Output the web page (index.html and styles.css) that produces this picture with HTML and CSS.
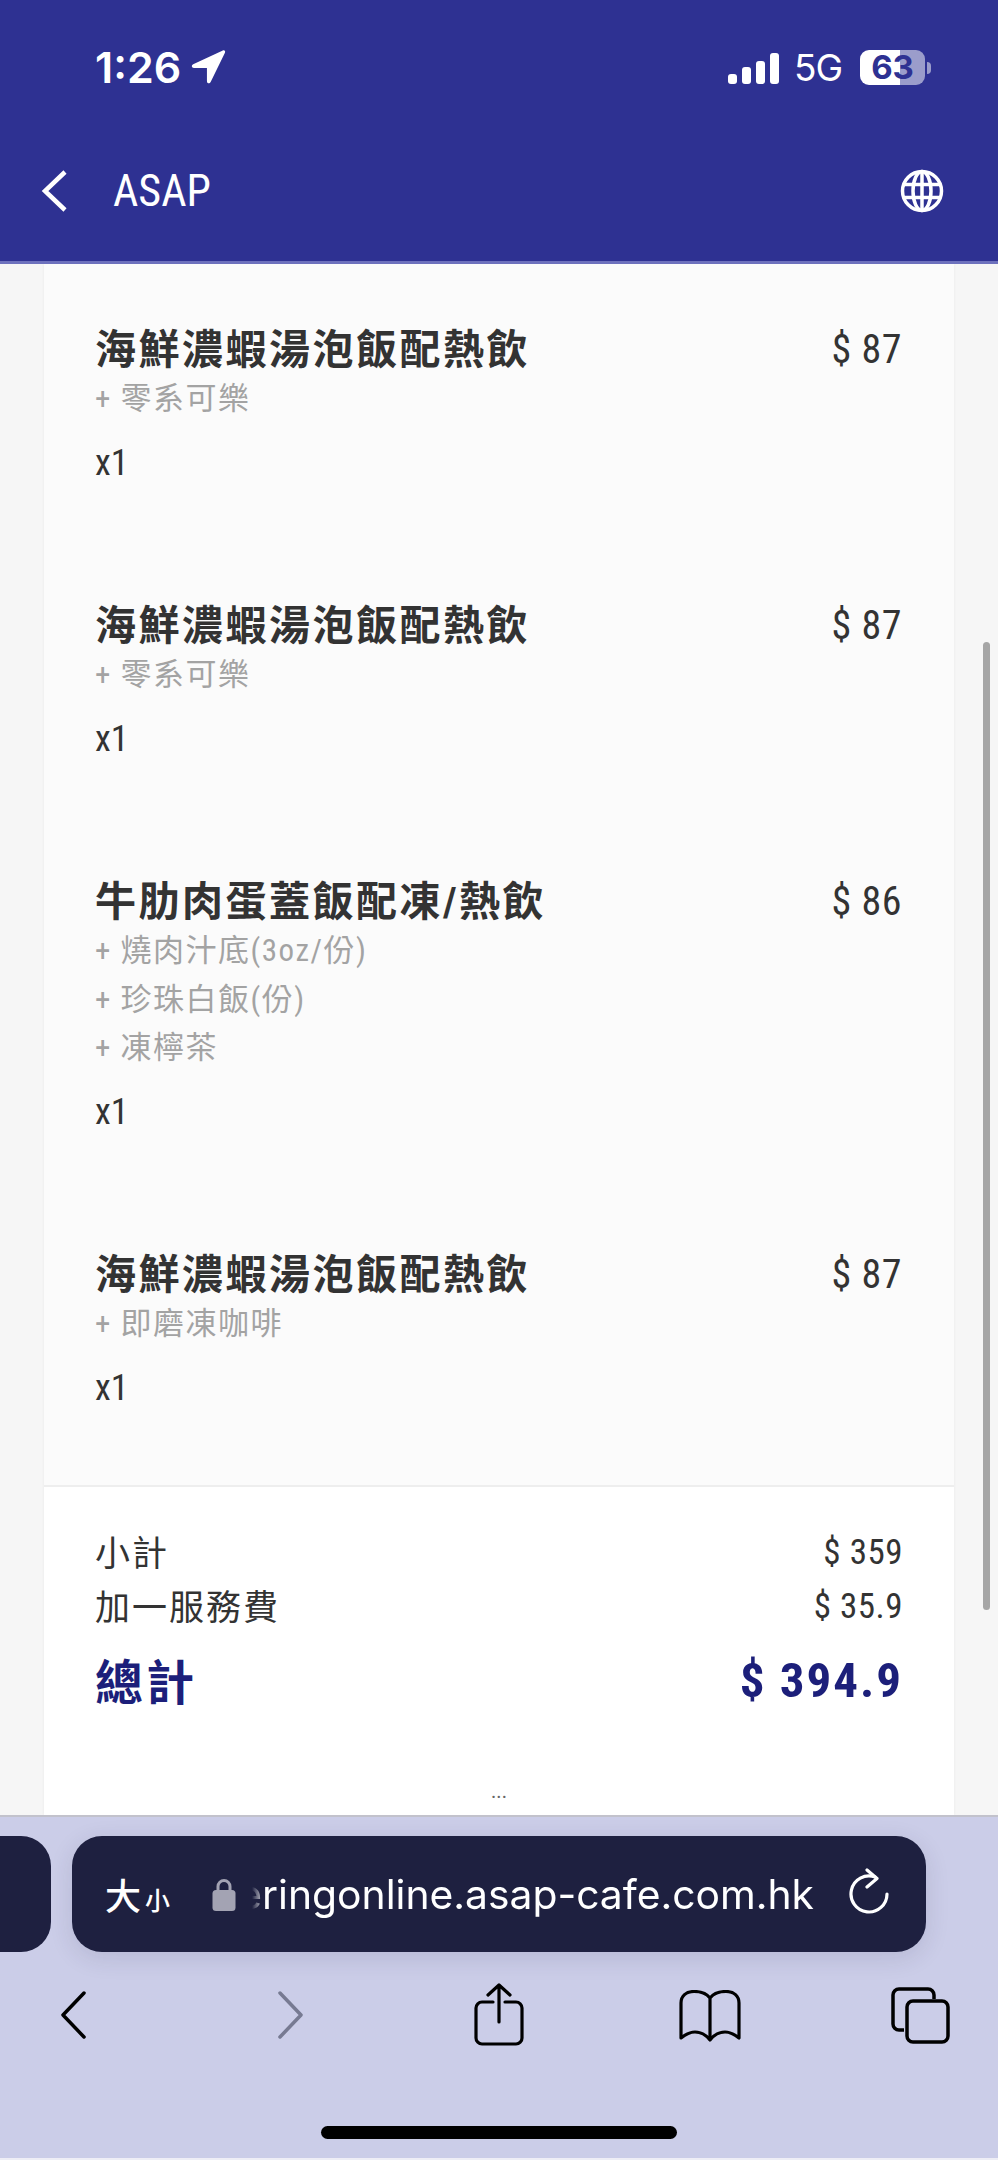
FILE: index.html
```html
<!DOCTYPE html>
<html lang="zh-Hant">
<head>
    <meta charset="UTF-8">
    <meta name="viewport" content="width=device-width, initial-scale=1.0">
    <title>ASAP</title>
    <link rel="stylesheet" href="styles.css">
</head>
<body>
    <header class="top-bar">
        <div class="status-bar">
            <div class="status-left">
                <span class="clock">1:26</span>
                <svg class="location" viewBox="0 0 34 34"><path d="M31 1.500 3 14.500c-2 1-1.500 3.500.7 3.500H16v12.500c0 2.200 2.500 2.700 3.500.7L33 3.500c.7-1.500-.5-2.700-2-2Z" fill="#fff"/></svg>
            </div>
            <div class="status-right">
                <div class="signal"><i></i><i></i><i></i><i></i></div>
                <span class="network">5G</span>
                <div class="battery"><span>63</span></div>
                <div class="battery-tip"></div>
            </div>
        </div>
        <nav class="nav-row">
            <svg class="nav-back" viewBox="0 0 28 44"><path d="M25 3 5 22l20 19" fill="none" stroke="#fff" stroke-width="4.500"/></svg>
            <span class="nav-title">ASAP</span>
            <svg class="globe" viewBox="0 0 44 44" fill="none" stroke="#fff" stroke-width="3.500">
                <circle cx="22" cy="22" r="19.500"/>
                <ellipse cx="22" cy="22" rx="9" ry="19.500"/>
                <path d="M22 2.500v39M3.500 15.500h37M3.500 28.500h37"/>
            </svg>
        </nav>
    </header>

    <main class="page">
        <div class="card">
            <section class="order-list">
                <div class="order-item">
                    <div class="item-head"><span class="item-name">海鮮濃蝦湯泡飯配熱飲</span><span class="item-price">$ 87</span></div>
                    <div class="item-option">+ 零系可樂</div>
                    <div class="item-qty">x1</div>
                </div>
                <div class="order-item">
                    <div class="item-head"><span class="item-name">海鮮濃蝦湯泡飯配熱飲</span><span class="item-price">$ 87</span></div>
                    <div class="item-option">+ 零系可樂</div>
                    <div class="item-qty">x1</div>
                </div>
                <div class="order-item">
                    <div class="item-head"><span class="item-name">牛肋肉蛋蓋飯配凍/熱飲</span><span class="item-price">$ 86</span></div>
                    <div class="item-option">+ 燒肉汁底(3oz/份)</div>
                    <div class="item-option">+ 珍珠白飯(份)</div>
                    <div class="item-option">+ 凍檸茶</div>
                    <div class="item-qty">x1</div>
                </div>
                <div class="order-item">
                    <div class="item-head"><span class="item-name">海鮮濃蝦湯泡飯配熱飲</span><span class="item-price">$ 87</span></div>
                    <div class="item-option">+ 即磨凍咖啡</div>
                    <div class="item-qty">x1</div>
                </div>
            </section>
            <section class="totals">
                <div class="total-row"><span>小計</span><span class="total-value">$ 359</span></div>
                <div class="total-row"><span>加一服務費</span><span class="total-value">$ 35.9</span></div>
                <div class="grand-row"><span>總計</span><span class="grand-value">$ 394.9</span></div>
                <div class="more-dots">...</div>
            </section>
        </div>
        <div class="scroll-thumb"></div>
    </main>

    <footer class="browser-bar">
        <div class="tab-row">
            <div class="tab-peek"></div>
            <div class="url-pill">
                <span class="text-size">大<small>小</small></span>
                <svg class="lock" viewBox="0 0 24 33"><path d="M6 14V8.500a6 6 0 0 1 12 0V14" fill="none" stroke="#a3a3b3" stroke-width="3"/><rect x="0.500" y="12" width="23" height="21" rx="3.500" fill="#a3a3b3"/></svg>
                <div class="url-clip"><span class="url-text">eringonline.asap-cafe.com.hk</span></div>
                <svg class="reload" viewBox="0 0 40 46" fill="none" stroke="#fff" stroke-width="3.200" stroke-linecap="round" stroke-linejoin="round"><path d="M26 9a18 18 0 1 0 12 17"/><path d="M18 2l10 8.500L18 19"/></svg>
            </div>
        </div>
        <div class="tool-row">
            <svg class="tool-back" viewBox="0 0 28 48"><path d="M25 2 4 24l21 22" fill="none" stroke="#000" stroke-width="3.500" stroke-linecap="round" stroke-linejoin="round"/></svg>
            <svg class="tool-forward" viewBox="0 0 28 48"><path d="M3 2l21 22L3 46" fill="none" stroke="#777a92" stroke-width="3.500" stroke-linecap="round" stroke-linejoin="round"/></svg>
            <svg class="tool-share" viewBox="0 0 50 64" fill="none" stroke="#000" stroke-width="3.200" stroke-linecap="round" stroke-linejoin="round"><path d="M19 19H8a6 6 0 0 0-6 6v30a6 6 0 0 0 6 6h34a6 6 0 0 0 6-6V25a6 6 0 0 0-6-6H31"/><path d="M25 39V2M14 12 25 2l11 10"/></svg>
            <svg class="tool-book" viewBox="0 0 62 52" fill="none" stroke="#000" stroke-width="3.200" stroke-linejoin="round"><path d="M31 8C27 3 21 1.500 15 1.500 7 1.500 2 6 2 13v35c5-4 10-6 14-6 6 0 11 3 15 8 4-5 9-8 15-8 4 0 9 2 14 6V13c0-7-5-11.500-13-11.500-6 0-12 1.500-16 6.500Zm0 0v42"/></svg>
            <svg class="tool-tabs" viewBox="0 0 60 58" fill="none" stroke="#000" stroke-width="3.500"><path d="M13 43H8a6 6 0 0 1-6-6V8a6 6 0 0 1 6-6h29a6 6 0 0 1 6 6v4"/><rect x="16" y="14" width="41" height="41" rx="6"/></svg>
        </div>
        <div class="home-bar"></div>
    </footer>
</body>
</html>
```
FILE: styles.css
```css
* {
    box-sizing: border-box;
}

html, body {
    margin: 0;
    padding: 0;
}

body {
    width: 998px;
    height: 2160px;
    display: flex;
    flex-direction: column;
    overflow: hidden;
    font-family: Roboto, "Noto Sans CJK TC", sans-serif;
    font-stretch: 75%;
    color: #333;
    background: #f6f6f6;
}

/* Top bar */
.top-bar {
    height: 264px;
    flex-shrink: 0;
    background: #2e3192;
    border-bottom: 3px solid #6d71bd;
    color: #fff;
}

.status-bar {
    height: 120px;
    padding: 45px 67px 0 95px;
    display: flex;
    justify-content: space-between;
    align-items: flex-start;
}

.status-left, .status-right {
    display: flex;
    align-items: center;
}

.clock {
    font-family: Inter, sans-serif;
    font-stretch: normal;
    font-size: 43px;
    font-weight: 600;
    line-height: 44px;
}

.location {
    width: 36px;
    height: 36px;
    margin-left: 9px;
}

.signal {
    display: flex;
    align-items: flex-end;
    gap: 5.500px;
    height: 31px;
    margin-top: 2px;
}

.signal i {
    width: 8.500px;
    background: #fff;
    border-radius: 3px;
}

.signal i:nth-child(1) { height: 10px; }
.signal i:nth-child(2) { height: 17px; }
.signal i:nth-child(3) { height: 23px; }
.signal i:nth-child(4) { height: 31px; }

.network {
    font-family: Inter, sans-serif;
    font-stretch: normal;
    font-size: 37px;
    font-weight: 400;
    margin-left: 15px;
    letter-spacing: -1px;
}

.battery {
    width: 65px;
    height: 35px;
    margin-left: 18px;
    border-radius: 9px;
    background: linear-gradient(90deg, #fff 0 61%, #9b9dcb 61%);
    color: #2e3192;
    text-align: center;
}

.battery span {
    font-family: Inter, sans-serif;
    font-stretch: normal;
    font-size: 33px;
    font-weight: 700;
    line-height: 35px;
}

.battery-tip {
    width: 4px;
    height: 12px;
    margin-left: 2px;
    border-radius: 0 6px 6px 0;
    background: #9b9dcb;
}

.nav-row {
    height: 141px;
    padding: 0 54px 0 40px;
    display: flex;
    align-items: center;
}

.nav-back {
    width: 28px;
    height: 44px;
}

.nav-title {
    flex: 1;
    margin-left: 45px;
    font-size: 44px;
    line-height: 44px;
}

.globe {
    width: 44px;
    height: 44px;
}

/* Order card */
.page {
    flex: 1;
    position: relative;
    overflow: hidden;
    padding: 0 44px;
}

.card {
    height: 100%;
    display: flex;
    flex-direction: column;
    box-shadow: 0 0 3px rgba(0, 0, 0, 0.06);
}

.order-list {
    padding: 59px 52px 77px 51px;
    display: flex;
    flex-direction: column;
    gap: 116.500px;
    background: #fbfbfb;
    border-bottom: 2px solid #eeeeee;
}

.item-head {
    display: flex;
    justify-content: space-between;
    align-items: center;
    height: 50px;
}

.item-name {
    margin-top: -5px;
    font-size: 41px;
    font-weight: 700;
    letter-spacing: 2.500px;
}

.item-price {
    margin-top: 3px;
    font-size: 40px;
    letter-spacing: 0.500px;
}

.item-option {
    height: 48.500px;
    padding-top: 2px;
    font-size: 31px;
    line-height: 48px;
    letter-spacing: 1.500px;
    color: #a3a3a3;
}

.item-qty {
    height: 40px;
    margin-top: 21px;
    font-size: 36px;
    line-height: 40px;
}

.totals {
    flex: 1;
    position: relative;
    padding: 37px 51px 0;
    background: #fff;
}

.total-row {
    display: flex;
    justify-content: space-between;
    align-items: center;
    height: 54px;
    font-size: 35px;
    letter-spacing: 2px;
}

.total-value {
    margin-top: 4px;
    font-size: 35px;
    letter-spacing: 0.500px;
}

.grand-row {
    display: flex;
    justify-content: space-between;
    align-items: center;
    height: 70px;
    margin-top: 12px;
    font-size: 48px;
    font-weight: 700;
    letter-spacing: 3px;
    color: #1c1f7a;
}

.grand-value {
    margin-top: 4px;
    font-size: 49px;
    letter-spacing: 2px;
}

.more-dots {
    position: absolute;
    left: 0;
    right: 0;
    bottom: 14px;
    text-align: center;
    font-size: 20px;
    line-height: 20px;
    color: #666;
}

.scroll-thumb {
    position: absolute;
    left: 983px;
    top: 378px;
    width: 7px;
    height: 968px;
    border-radius: 4px;
    background: #a6a6a6;
}

/* Safari bar */
.browser-bar {
    height: 345px;
    flex-shrink: 0;
    background: #cbcde8;
    border-top: 2px solid #c2c2cc;
    border-bottom: 2px solid #eeeef6;
    padding-top: 19px;
}

.tab-row {
    display: flex;
    gap: 21px;
}

.tab-peek {
    width: 51px;
    height: 116px;
    flex-shrink: 0;
    border-radius: 0 30px 30px 0;
    background: #1e2040;
}

.url-pill {
    width: 854px;
    height: 116px;
    padding: 0 37px 0 33px;
    display: flex;
    align-items: center;
    border-radius: 30px;
    background: #1e2040;
    color: #fff;
    box-shadow: 0 6px 24px rgba(30, 32, 64, 0.12);
}

.text-size {
    width: 107px;
    font-family: "Noto Sans CJK TC", sans-serif;
    font-size: 36px;
    font-weight: 500;
}

.text-size small {
    margin-left: 4px;
    font-size: 25px;
}

.lock {
    width: 24px;
    height: 33px;
    flex-shrink: 0;
}

.url-clip {
    width: 565px;
    margin-left: 14px;
    overflow: hidden;
    display: flex;
    justify-content: flex-end;
    -webkit-mask-image: linear-gradient(90deg, transparent 2px, #000 16px);
    mask-image: linear-gradient(90deg, transparent 2px, #000 16px);
}

.url-text {
    font-family: Inter, sans-serif;
    font-stretch: normal;
    font-size: 40.800px;
    white-space: nowrap;
}

.reload {
    width: 40px;
    height: 46px;
    margin-left: 35px;
    margin-top: -6px;
    flex-shrink: 0;
}

.tool-row {
    position: relative;
    height: 64px;
    margin-top: 31px;
}

.tool-row svg {
    position: absolute;
}

.tool-back { left: 59px; top: 8px; width: 28px; height: 48px; }
.tool-forward { left: 277px; top: 8px; width: 28px; height: 48px; }
.tool-share { left: 474px; top: 0; width: 50px; height: 64px; }
.tool-book { left: 679px; top: 7px; width: 62px; height: 52px; }
.tool-tabs { left: 891px; top: 4px; width: 60px; height: 58px; }

.home-bar {
    width: 356px;
    height: 13px;
    margin: 79px auto 0;
    border-radius: 7px;
    background: #000;
}
```
